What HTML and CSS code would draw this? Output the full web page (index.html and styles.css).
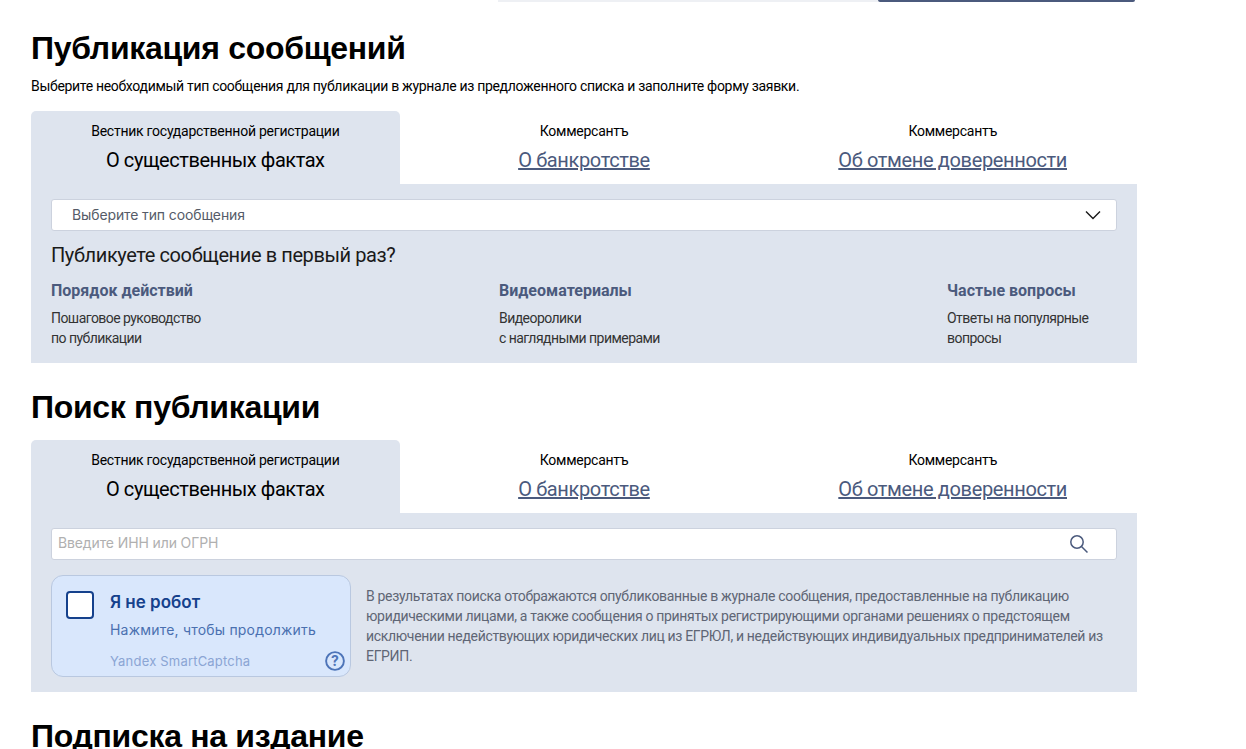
FILE: index.html
```html
<!DOCTYPE html>
<html lang="ru">
<head>
  <meta charset="utf-8">
  <title>Публикация сообщений</title>
  <link rel="stylesheet" href="styles.css">
</head>
<body>
  <div class="top_strip">
    <div class="top_field"></div>
    <div class="top_button"></div>
  </div>

  <main class="page">
    <h1 class="heading first">Публикация сообщений</h1>
    <p class="intro">Выберите необходимый тип сообщения для публикации в журнале из предложенного списка и заполните форму заявки.</p>

    <div class="tabs">
      <div class="tab active">
        <div class="tab_source">Вестник государственной регистрации</div>
        <div class="tab_title">О существенных фактах</div>
      </div>
      <div class="tab">
        <div class="tab_source">Коммерсантъ</div>
        <a class="tab_title" href="#">О банкротстве</a>
      </div>
      <div class="tab">
        <div class="tab_source">Коммерсантъ</div>
        <a class="tab_title" href="#">Об отмене доверенности</a>
      </div>
    </div>
    <div class="panel">
      <div class="field select">
        <span>Выберите тип сообщения</span>
        <svg class="chevron" width="16" height="10" viewBox="0 0 16 10"><path d="M1 1.5l7 7 7-7" fill="none" stroke="#1a1a1a" stroke-width="1.4"/></svg>
      </div>
      <h3 class="panel_question">Публикуете сообщение в первый раз?</h3>
      <div class="help">
        <div class="help_item">
          <a class="help_title" href="#">Порядок действий</a>
          <p class="help_text">Пошаговое руководство<br>по публикации</p>
        </div>
        <div class="help_item">
          <a class="help_title" href="#">Видеоматериалы</a>
          <p class="help_text">Видеоролики<br>с наглядными примерами</p>
        </div>
        <div class="help_item">
          <a class="help_title" href="#">Частые вопросы</a>
          <p class="help_text">Ответы на популярные<br>вопросы</p>
        </div>
      </div>
    </div>

    <h1 class="heading">Поиск публикации</h1>
    <div class="tabs">
      <div class="tab active">
        <div class="tab_source">Вестник государственной регистрации</div>
        <div class="tab_title">О существенных фактах</div>
      </div>
      <div class="tab">
        <div class="tab_source">Коммерсантъ</div>
        <a class="tab_title" href="#">О банкротстве</a>
      </div>
      <div class="tab">
        <div class="tab_source">Коммерсантъ</div>
        <a class="tab_title" href="#">Об отмене доверенности</a>
      </div>
    </div>
    <div class="panel">
      <div class="field search">
        <span>Введите ИНН или ОГРН</span>
        <svg class="magnifier" width="20" height="20" viewBox="0 0 20 20"><circle cx="8" cy="8" r="6.2" fill="none" stroke="#4b5a7d" stroke-width="1.5"/><path d="M12.5 12.5l6 6" stroke="#4b5a7d" stroke-width="1.5"/></svg>
      </div>
      <div class="search_row">
        <div class="captcha">
          <div class="captcha_box"></div>
          <div class="captcha_text">
            <div class="captcha_title">Я не робот</div>
            <div class="captcha_hint">Нажмите, чтобы продолжить</div>
            <div class="captcha_brand">Yandex SmartCaptcha</div>
          </div>
          <svg class="captcha_help" width="20" height="20" viewBox="0 0 20 20"><circle cx="10" cy="10" r="8.9" fill="none" stroke="#4d74b8" stroke-width="1.9"/><text x="10" y="15" text-anchor="middle" class="captcha_mark">?</text></svg>
        </div>
        <p class="search_note">В результатах поиска отображаются опубликованные в журнале сообщения, предоставленные на публикацию юридическими лицами, а также сообщения о принятых регистрирующими органами решениях о предстоящем исключении недействующих юридических лиц из ЕГРЮЛ, и недействующих индивидуальных предпринимателей из ЕГРИП.</p>
      </div>
    </div>

    <h1 class="heading last">Подписка на издание</h1>
  </main>
</body>
</html>
```

FILE: styles.css
```css
html, body {
  height: 749px;
  overflow: hidden;
}
body {
  margin: 0;
  background-color: #fff;
  color: #000;
  font-family: Roboto, "Liberation Sans", sans-serif;
}
.top_strip {
  display: flex;
  height: 2px;
  margin-left: 498px;
  width: 637px;
}
.top_field {
  width: 380px;
  background-color: #eef0f4;
}
.top_button {
  flex: 1;
  background-color: #4b5a7d;
  border-radius: 0 0 4px 4px;
}
.page {
  width: 1106px;
  margin-left: 31px;
}
.heading {
  margin: 0;
  font-family: "Liberation Sans", Arial, sans-serif;
  font-size: 32px;
  line-height: 40px;
  font-weight: 700;
  letter-spacing: -0.3px;
  padding-top: 24px;
  padding-bottom: 13px;
}
.heading.first {
  padding-top: 26px;
  padding-bottom: 0;
}
.heading.last {
  padding-top: 24px;
}
.intro {
  margin: 0;
  padding: 8px 0 15px;
  font-size: 14px;
  line-height: 20px;
  letter-spacing: -0.31px;
}
.tabs {
  display: grid;
  grid-template-columns: repeat(3, 1fr);
  height: 73px;
}
.tab {
  text-align: center;
  padding-top: 10px;
  border-radius: 5px 5px 0 0;
}
.tab.active {
  background-color: #dee4ee;
}
.tab_source {
  font-size: 14px;
  line-height: 20px;
  letter-spacing: -0.25px;
}
.tab_title {
  display: block;
  margin-top: 6px;
  font-size: 20px;
  line-height: 26px;
  letter-spacing: -0.45px;
}
a.tab_title {
  display: inline-block;
  letter-spacing: -0.36px;
  color: #4b5a7d;
}
.panel {
  background-color: #dee4ee;
  padding: 15px 20px;
  height: 179px;
  box-sizing: border-box;
}
.field {
  height: 32px;
  box-sizing: border-box;
  display: flex;
  align-items: center;
  justify-content: space-between;
  background-color: #fff;
  border: 1px solid #ccd2de;
  border-radius: 3px;
  font-family: Inter, Roboto, sans-serif;
  font-size: 14px;
  letter-spacing: -0.12px;
}
.select {
  padding: 0 15px 0 20px;
  color: #555b68;
}
.select span {
  margin-top: -2px;
}
.search {
  padding: 0 27px 0 6px;
  color: #b0b0b0;
}
.search span {
  margin-top: -4px;
}
.chevron {
  display: block;
}
.panel_question {
  margin: 11px 0 0;
  font-size: 20px;
  line-height: 26px;
  font-weight: 400;
  letter-spacing: -0.4px;
  color: #1a1a1a;
}
.help {
  display: grid;
  grid-template-columns: 448px 448px 1fr;
  margin-top: 12px;
}
.help_title {
  display: block;
  font-size: 16px;
  line-height: 22px;
  font-weight: 700;
  letter-spacing: 0;
  color: #4b5a7d;
  text-decoration: none;
}
.help_text {
  margin: 6px 0 0;
  font-size: 14px;
  line-height: 20px;
  letter-spacing: -0.55px;
  color: #333;
}
.search_row {
  display: flex;
  gap: 15px;
  margin-top: 15px;
}
.captcha {
  position: relative;
  display: flex;
  flex: none;
  width: 300px;
  height: 102px;
  box-sizing: border-box;
  padding: 15px 14px;
  gap: 16px;
  background-color: #d9e7fc;
  border: 1px solid #b9c8e0;
  border-radius: 12px;
  font-family: Inter, Roboto, sans-serif;
}
.captcha_box {
  flex: none;
  width: 28px;
  height: 28px;
  box-sizing: border-box;
  background-color: #fff;
  border: 2px solid #15418c;
  border-radius: 4px;
}
.captcha_title {
  font-size: 17px;
  line-height: 24px;
  font-weight: 600;
  color: #15418c;
  margin-top: -1px;
}
.captcha_hint {
  margin-top: 6px;
  font-size: 14px;
  line-height: 20px;
  letter-spacing: 0.2px;
  color: #4a70b0;
}
.captcha_brand {
  margin-top: 11px;
  font-size: 13px;
  line-height: 20px;
  letter-spacing: 0.2px;
  color: #8ba5d4;
}
.captcha_help {
  position: absolute;
  right: 5px;
  bottom: 5px;
}
.captcha_mark {
  font-family: Inter, sans-serif;
  font-size: 14px;
  font-weight: 700;
  fill: #4d74b8;
}
.search_note {
  flex: 1;
  margin: 11px 0 0;
  font-size: 14px;
  line-height: 20px;
  letter-spacing: -0.33px;
  color: #5f6675;
}
```
